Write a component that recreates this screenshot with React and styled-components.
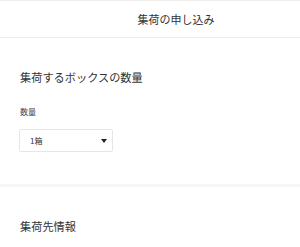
import React from "react";
import styled, { createGlobalStyle } from "styled-components";

const Global = createGlobalStyle`
  html, body { margin: 0; padding: 0; background: #fff; }
  body { font-family: "Noto Sans CJK JP", "Noto Sans", sans-serif; color: #333; }
`;

const Page = styled.div`
  width: 300px;
  display: flex;
  flex-direction: column;
`;

const Header = styled.header`
  height: 36px;
  border-top: 1px solid #ededed;
  border-bottom: 1px solid #ededed;
  display: flex;
  align-items: center;
  justify-content: center;
  padding-left: 52px;
`;

const HeaderTitle = styled.h1`
  margin: 0;
  font-size: 11px;
  font-weight: 400;
  line-height: 16px;
  color: #333;
`;

const Section = styled.section`
  padding: ${(p) => p.$top}px 20px ${(p) => p.$bottom}px;
  display: flex;
  flex-direction: column;
  align-items: flex-start;
`;

const SectionTitle = styled.h2`
  margin: 0;
  font-size: 11.2px;
  font-weight: 400;
  line-height: 16px;
  color: #333;
`;

const Label = styled.label`
  margin-top: 21px;
  font-size: 8px;
  line-height: 12px;
  color: #444;
`;

const Select = styled.div`
  margin-top: 11px;
  margin-left: -1px;
  width: 94px;
  height: 23px;
  box-sizing: border-box;
  border: 1px solid #e6e6e6;
  border-radius: 2px;
  display: flex;
  align-items: center;
  justify-content: space-between;
  padding: 0 5px 0 10px;
  font-size: 8px;
  color: #333;
`;

const Caret = styled.span`
  width: 0;
  height: 0;
  border-left: 3.5px solid transparent;
  border-right: 3.5px solid transparent;
  border-top: 4px solid #222;
`;

const Divider = styled.div`
  height: 3px;
  background: #f6f6f6;
`;

export default function App() {
  return (
    <Page>
      <Global />
      <Header>
        <HeaderTitle>集荷の申し込み</HeaderTitle>
      </Header>
      <Section $top={31} $bottom={32}>
        <SectionTitle>集荷するボックスの数量</SectionTitle>
        <Label>数量</Label>
        <Select>
          <span>1箱</span>
          <Caret />
        </Select>
      </Section>
      <Divider />
      <Section $top={31} $bottom={20}>
        <SectionTitle>集荷先情報</SectionTitle>
      </Section>
    </Page>
  );
}
